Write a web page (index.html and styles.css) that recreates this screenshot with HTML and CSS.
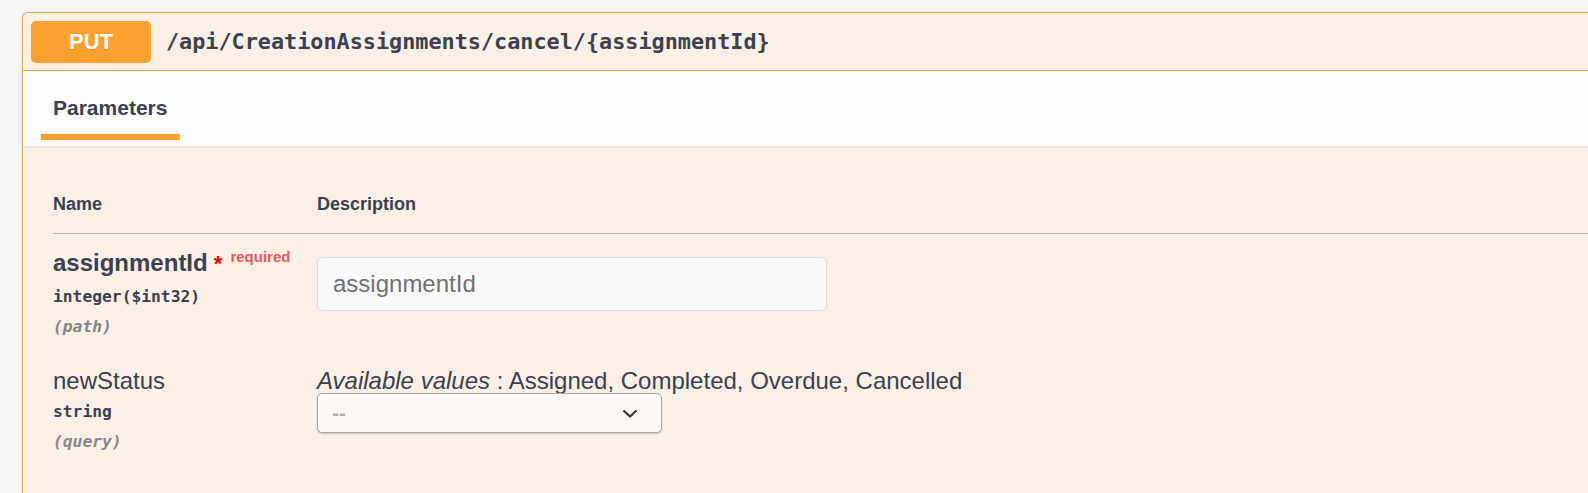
FILE: index.html
```html
<!DOCTYPE html>
<html>
<head>
<meta charset="utf-8">
<link rel="stylesheet" href="styles.css">
</head>
<body>
<div class="page">
  <div class="opblock">
    <div class="summary">
      <span class="method">PUT</span>
      <span class="path">/api/CreationAssignments/cancel/{assignmentId}</span>
    </div>
    <div class="section-header">
      <div class="tab-item"><h4><span>Parameters</span></h4></div>
    </div>
    <div class="table-container">
      <table class="parameters">
        <thead>
          <tr><th class="col-name">Name</th><th class="col-desc">Description</th></tr>
        </thead>
        <tbody>
          <tr>
            <td class="col-name">
              <div class="param-name required">assignmentId<span class="star">&nbsp;*</span><span class="req">required</span></div>
              <div class="param-type">integer<span class="fmt">($int32)</span></div>
              <div class="param-in">(path)</div>
            </td>
            <td class="col-desc">
              <input class="text-input" type="text" placeholder="assignmentId">
            </td>
          </tr>
          <tr>
            <td class="col-name">
              <div class="param-name">newStatus</div>
              <div class="param-type">string</div>
              <div class="param-in">(query)</div>
            </td>
            <td class="col-desc">
              <div class="enum"><i>Available values</i> : Assigned, Completed, Overdue, Cancelled</div>
              <div class="select">
                <span class="select-value">--</span>
                <svg class="chev" width="16" height="9" viewBox="0 0 16 9"><path d="M1.5 1.5 L8 7.5 L14.5 1.5" fill="none" stroke="#333" stroke-width="2.2"/></svg>
              </div>
            </td>
          </tr>
        </tbody>
      </table>
    </div>
  </div>
</div>
</body>
</html>
```
FILE: styles.css
```css
html, body {
  margin: 0;
  padding: 0;
  background: #f7f7f8;
  overflow: hidden;
}
.page {
  width: 1588px;
  height: 493px;
  overflow: hidden;
  padding: 12px 0 0 22px;
  box-sizing: border-box;
  font-family: "Liberation Sans", Arial, sans-serif;
  color: #3b4151;
}
.opblock {
  width: 1640px;
  border: 1px solid #eea65a;
  border-right: none;
  border-radius: 6px 0 0 0;
  background: #fbf0e6;
  box-shadow: 0 0 3px rgba(0,0,0,.12);
  min-height: 520px;
}
.summary {
  display: flex;
  align-items: center;
  padding: 7px 7.5px 7px 8px;
  border-bottom: 1px solid #eea65a;
  height: 43px;
}
.method {
  width: 120px;
  height: 42px;
  border-radius: 5px;
  background: #fca130;
  color: #fff;
  font-weight: 700;
  font-size: 22px;
  display: flex;
  align-items: center;
  justify-content: center;
  text-shadow: 0 1px 0 rgba(0,0,0,.1);
}
.path {
  padding-left: 15px;
  font-family: "DejaVu Sans Mono", "Liberation Mono", monospace;
  font-weight: 700;
  font-size: 21.8px;
  letter-spacing: 0;
  color: #3b4151;
}
.section-header {
  height: 75px;
  background: #fdfbf9;
  box-shadow: 0 1px 2px rgba(0,0,0,.1);
  padding: 0 30px;
  display: flex;
  align-items: flex-start;
}
.tab-item h4 {
  margin: 0;
  padding-top: 25px;
  font-size: 21px;
  font-weight: 700;
  line-height: 24px;
}
.tab-item h4 span {
  position: relative;
  display: inline-block;
}
.tab-item h4 span::after {
  content: "";
  position: absolute;
  left: 50%;
  transform: translateX(-50%);
  width: 121%;
  height: 6px;
  bottom: -20px;
  background: #fca130;
}
.table-container {
  padding: 30px 0 0 30px;
}
.parameters {
  border-collapse: collapse;
  width: 100%;
}
.parameters th {
  text-align: left;
  font-size: 18px;
  font-weight: 700;
  padding: 18px 0 18px 0;
  line-height: 21px;
  border-bottom: 1px solid #b9b2ab;
}
.parameters td {
  vertical-align: top;
  padding: 15px 0 15px 0;
}
.col-name {
  width: 264px;
}
.param-name {
  font-size: 24px;
  line-height: 27px;
  color: #3b4151;
}
.param-name.required {
  font-weight: 700;
}
.star {
  color: #e00;
  font-weight: 700;
  font-size: 22px;
}
.req {
  color: #f0585d;
  font-size: 15px;
  font-weight: 700;
  position: relative;
  top: -9px;
  padding-left: 8px;
}
.param-type {
  font-family: "DejaVu Sans Mono", "Liberation Mono", monospace;
  font-weight: 700;
  font-size: 16.3px;
  padding: 8px 0 10px;
  line-height: 20px;
}
.param-in {
  font-family: "DejaVu Sans Mono", "Liberation Mono", monospace;
  font-style: italic;
  font-weight: 700;
  font-size: 16.3px;
  color: #868686;
  line-height: 20px;
}
.text-input {
  display: block;
  box-sizing: border-box;
  width: 510px;
  height: 54px;
  margin: 8px 0 0 0;
  padding: 12px 15px;
  border: 1px solid #dcdcdc;
  border-radius: 6px;
  background: #fafafa;
  font-family: "Liberation Sans", Arial, sans-serif;
  font-size: 24px;
  color: #3b4151;
  outline: none;
}
.text-input::placeholder {
  color: #707070;
}
.enum {
  font-size: 24px;
  line-height: 27px;
  margin-top: 0;
}
.select {
  position: relative;
  box-sizing: border-box;
  width: 345px;
  height: 40px;
  margin-top: -1px;
  border: 1px solid #a9a6a3;
  border-radius: 5px;
  background: #fcf8f5;
  box-shadow: 0 1px 2px rgba(0,0,0,.2);
  display: flex;
  align-items: center;
  padding: 0 14px;
}
.select-value {
  color: #b0b0b0;
  font-size: 21px;
  font-weight: 700;
  flex: 1;
}
.chev {
  margin-right: 9px;
}
```
